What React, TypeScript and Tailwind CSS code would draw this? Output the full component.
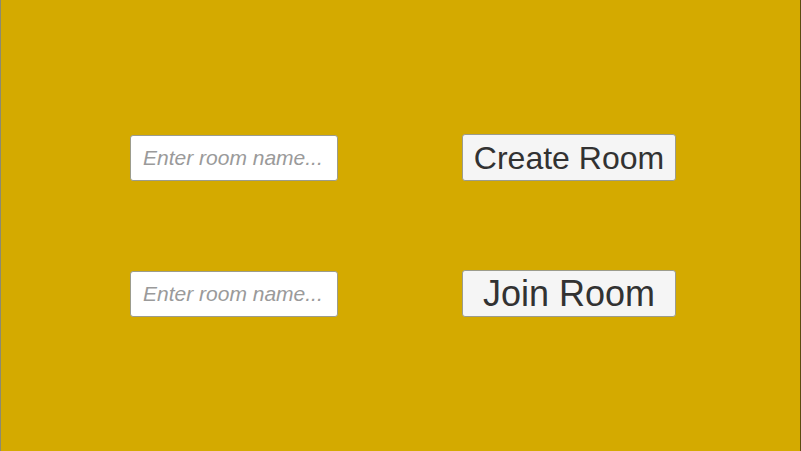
import React from 'react';

function RoomInput() {
  return (
    <input
      type="text"
      placeholder="Enter room name..."
      className="w-[208px] h-[46px] rounded-[3px] border border-[#9c9c8c] bg-white px-3 text-[21px] italic text-[#323232] placeholder:text-[#9a9a9a] outline-none"
      style={{ fontFamily: '"Liberation Sans", Arial, sans-serif' }}
    />
  );
}

function RoomButton({ label, size }: { label: string; size: string }) {
  return (
    <button
      className={`w-[214px] h-[47px] rounded-[3px] border border-[#9c9c8c] bg-[#f5f5f5] text-[#323232] leading-none flex items-center justify-center ${size}`}
      style={{ fontFamily: '"Liberation Sans", Arial, sans-serif' }}
    >
      {label}
    </button>
  );
}

export default function App() {
  return (
    <div className="w-[801px] h-[451px] bg-[#d4aa00] border-l border-l-[#8c8a70] border-r border-r-[#5c4c10] overflow-hidden">
      <div className="flex flex-col gap-[89px] pt-[134px] pl-[129px]">
        <div className="flex items-center gap-[124px]">
          <RoomInput />
          <RoomButton label="Create Room" size="text-[32px]" />
        </div>
        <div className="flex items-center gap-[124px]">
          <RoomInput />
          <RoomButton label="Join Room" size="text-[36px]" />
        </div>
      </div>
    </div>
  );
}
